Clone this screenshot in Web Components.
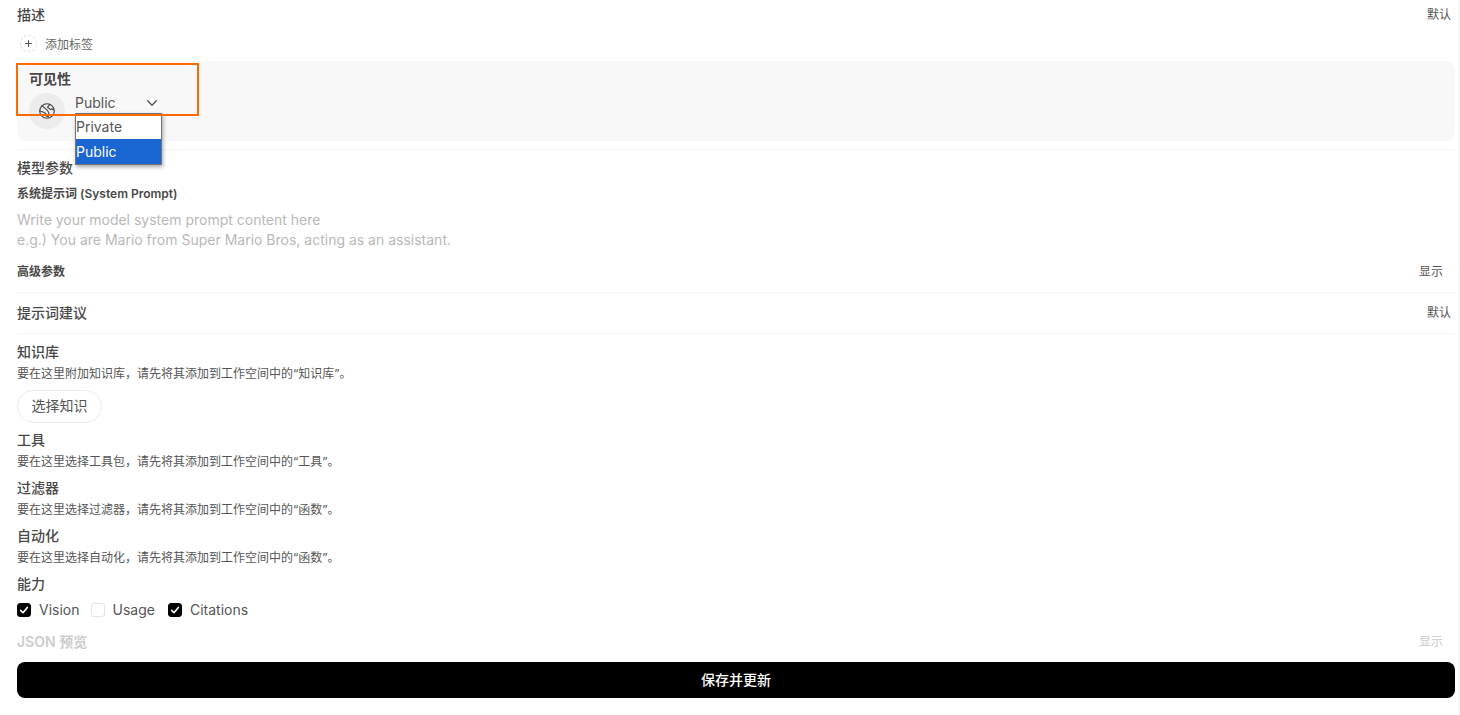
<!DOCTYPE html>
<html lang="zh">
<head>
<meta charset="utf-8">
<title>模型</title>
<style>
    html, body {
        margin: 0;
        height: 715px;
        overflow: hidden;
        background: #fff;
        font-family: Inter, "Noto Sans CJK SC", sans-serif;
        color: #333;
    }
</style>
</head>
<body>
<model-form></model-form>

<script>
class FieldRow extends HTMLElement {
    constructor() {
        super();
        this.attachShadow({ mode: 'open' });
    }

    connectedCallback() {
        const action = this.getAttribute('action') || '';
        this.shadowRoot.innerHTML = `
            <style>
                :host {
                    display: flex;
                    justify-content: space-between;
                    align-items: center;
                    font-size: 14px;
                    font-weight: 500;
                    line-height: 20px;
                    color: #484848;
                }
                :host([small]) {
                    font-size: 12px;
                    line-height: 18px;
                    font-weight: 600;
                }
                :host([faded]) {
                    color: #ccc;
                    font-weight: 600;
                }
                .action {
                    font-size: 12px;
                    font-weight: 400;
                    color: #555;
                    padding-right: var(--action-pad, 4px);
                }
                :host([faded]) .action {
                    color: #ccc;
                }
            </style>
            <span><slot></slot></span>
            <span class="action">${action}</span>
        `;
    }
}

class HelpText extends HTMLElement {
    constructor() {
        super();
        this.attachShadow({ mode: 'open' });
        this.shadowRoot.innerHTML = `
            <style>
                :host {
                    display: block;
                    font-size: 12px;
                    line-height: 16px;
                    color: #555;
                }
            </style>
            <slot></slot>
        `;
    }
}

class AddTag extends HTMLElement {
    constructor() {
        super();
        this.attachShadow({ mode: 'open' });
        this.shadowRoot.innerHTML = `
            <style>
                :host {
                    display: flex;
                    align-items: center;
                    gap: 8px;
                    padding-left: 3px;
                    height: 20px;
                    font-size: 12px;
                    color: #666;
                }
                .plus {
                    width: 15px;
                    height: 15px;
                    border: 1px dashed #ddd;
                    border-radius: 50%;
                    display: flex;
                    align-items: center;
                    justify-content: center;
                }
            </style>
            <span class="plus">
                <svg width="9" height="9" viewBox="0 0 16 16" fill="none" stroke="#555" stroke-width="2"><path d="M8 2v12M2 8h12"/></svg>
            </span>
            <slot></slot>
        `;
    }
}

class VisibilityPanel extends HTMLElement {
    constructor() {
        super();
        this.attachShadow({ mode: 'open' });
    }

    connectedCallback() {
        this.shadowRoot.innerHTML = `
            <style>
                :host {
                    display: block;
                    position: relative;
                    height: 80px;
                    box-sizing: border-box;
                    padding: 8px 12px 12px;
                    background: #f8f8f8;
                    border-radius: 10px;
                }
                .title {
                    font-size: 14px;
                    line-height: 20px;
                    font-weight: 600;
                    color: #484848;
                }
                .line {
                    display: flex;
                    gap: 10px;
                    margin-top: 4px;
                }
                .globe {
                    width: 36px;
                    height: 36px;
                    border-radius: 50%;
                    background: #ececec;
                    display: flex;
                    align-items: center;
                    justify-content: center;
                    color: #444;
                }
                .select {
                    position: relative;
                    display: flex;
                    justify-content: space-between;
                    align-items: center;
                    width: 84px;
                    height: 20px;
                    font-size: 14px;
                    color: #555;
                }
                .select > span {
                    margin-top: -2px;
                }
                .menu {
                    position: absolute;
                    left: 0;
                    top: 20px;
                    width: 85px;
                    background: #fff;
                    border: 1px solid #767676;
                    box-shadow: 1px 2px 4px rgba(0,0,0,0.35);
                    z-index: 2;
                }
                .menu div {
                    height: 25px;
                    line-height: 25px;
                }
                .menu .on {
                    background: #1a66d2;
                    color: #fff;
                }
                .mark {
                    position: absolute;
                    left: -1px;
                    top: 2px;
                    width: 179px;
                    height: 49px;
                    border: 2px solid #ff6a00;
                    z-index: 3;
                    pointer-events: none;
                }
            </style>
            <div class="title">可见性</div>
            <div class="line">
                <div class="globe">
                    <svg width="16" height="16" viewBox="0 0 16 16" fill="none" stroke="currentColor" stroke-width="1.1" stroke-linecap="round" stroke-linejoin="round">
                        <circle cx="8" cy="8" r="7.3"/>
                        <path d="M3 2.6l5.2 4.6 1.6 2.3-.4 4.2-2-.6-.6-2.7-3.4-1.6-2.6-.8"/>
                        <path d="M10.8 1.4L8.6 4.2l3 2.4 1.2-1 1.4 1.4"/>
                    </svg>
                </div>
                <div class="select">
                    <span>Public</span>
                    <svg width="14" height="14" viewBox="0 0 16 16" fill="none" stroke="#555" stroke-width="1.5" stroke-linecap="round" stroke-linejoin="round"><path d="M3 5.5l5 5 5-5"/></svg>
                    <div class="menu">
                        <div>Private</div>
                        <div class="on">Public</div>
                    </div>
                </div>
            </div>
            <div class="mark"></div>
        `;
    }
}

class CheckItem extends HTMLElement {
    constructor() {
        super();
        this.attachShadow({ mode: 'open' });
    }

    connectedCallback() {
        const checked = this.hasAttribute('checked');
        this.shadowRoot.innerHTML = `
            <style>
                :host {
                    display: inline-flex;
                    align-items: center;
                    gap: 8px;
                    font-size: 14px;
                    line-height: 20px;
                    color: #555;
                }
                .box {
                    width: 14px;
                    height: 14px;
                    box-sizing: border-box;
                    border-radius: 3px;
                    display: flex;
                    align-items: center;
                    justify-content: center;
                    background: ${checked ? '#000' : '#fff'};
                    border: 1px solid ${checked ? '#000' : '#e3e3e3'};
                }
            </style>
            <span class="box">${checked ? '<svg width="10" height="10" viewBox="0 0 12 12" fill="none" stroke="#fff" stroke-width="2" stroke-linecap="round" stroke-linejoin="round"><path d="M2 6.5l2.8 2.8L10 3"/></svg>' : ''}</span>
            <slot></slot>
        `;
    }
}

class ModelForm extends HTMLElement {
    constructor() {
        super();
        this.attachShadow({ mode: 'open' });
    }

    connectedCallback() {
        this.shadowRoot.innerHTML = `
            <style>
                :host {
                    display: block;
                    box-sizing: border-box;
                    width: 1460px;
                    height: 715px;
                    padding: 5px 4px 0 17px;
                    border-right: 1px solid #eee;
                    overflow: hidden;
                }
                hr {
                    border: 0;
                    height: 1px;
                    background: #f5f5f5;
                    margin: 0;
                }
                .placeholder {
                    font-size: 14px;
                    line-height: 20px;
                    color: #b8b8b8;
                }
                .pick {
                    display: block;
                    box-sizing: border-box;
                    width: 85px;
                    height: 33px;
                    border: 1px solid #eaeaea;
                    border-radius: 17px;
                    background: #fff;
                    color: #555;
                    font: inherit;
                    font-size: 14px;
                    padding: 0 0 3px;
                }
                .checks {
                    display: flex;
                    gap: 12px;
                    height: 20px;
                }
                .save {
                    display: block;
                    width: 100%;
                    height: 36px;
                    border: 0;
                    border-radius: 8px;
                    background: #000;
                    color: #fff;
                    font: inherit;
                    font-size: 14px;
                    font-weight: 500;
                    padding: 0 0 2px;
                }
            </style>
            <field-row action="默认">描述</field-row>
            <add-tag style="margin-top:8px">添加标签</add-tag>
            <visibility-panel style="margin-top:8px"></visibility-panel>
            <hr style="margin-top:8px">
            <field-row style="margin-top:8px">模型参数</field-row>
            <field-row small style="margin-top:7px">系统提示词 (System Prompt)</field-row>
            <div class="placeholder" style="margin-top:7px">Write your model system prompt content here<br>e.g.) You are Mario from Super Mario Bros, acting as an assistant.</div>
            <field-row small action="显示" style="margin-top:13px;--action-pad:12px">高级参数</field-row>
            <hr style="margin-top:11px">
            <field-row action="默认" style="margin-top:10px">提示词建议</field-row>
            <hr style="margin-top:10px">
            <field-row style="margin-top:8px">知识库</field-row>
            <help-text style="margin-top:4px">要在这里附加知识库，请先将其添加到工作空间中的“知识库”。</help-text>
            <button class="pick" style="margin-top:8px">选择知识</button>
            <field-row style="margin-top:7px">工具</field-row>
            <help-text style="margin-top:4px">要在这里选择工具包，请先将其添加到工作空间中的“工具”。</help-text>
            <field-row style="margin-top:8px">过滤器</field-row>
            <help-text style="margin-top:4px">要在这里选择过滤器，请先将其添加到工作空间中的“函数”。</help-text>
            <field-row style="margin-top:8px">自动化</field-row>
            <help-text style="margin-top:4px">要在这里选择自动化，请先将其添加到工作空间中的“函数”。</help-text>
            <field-row style="margin-top:8px">能力</field-row>
            <div class="checks" style="margin-top:6px">
                <check-item checked>Vision</check-item>
                <check-item style="margin-left:-1px">Usage</check-item>
                <check-item checked style="margin-left:1px">Citations</check-item>
            </div>
            <field-row faded action="显示" style="margin-top:12px;--action-pad:12px">JSON 预览</field-row>
            <button class="save" style="margin-top:10px">保存并更新</button>
        `;
    }
}

customElements.define('field-row', FieldRow);
customElements.define('help-text', HelpText);
customElements.define('add-tag', AddTag);
customElements.define('visibility-panel', VisibilityPanel);
customElements.define('check-item', CheckItem);
customElements.define('model-form', ModelForm);
</script>
</body>
</html>
